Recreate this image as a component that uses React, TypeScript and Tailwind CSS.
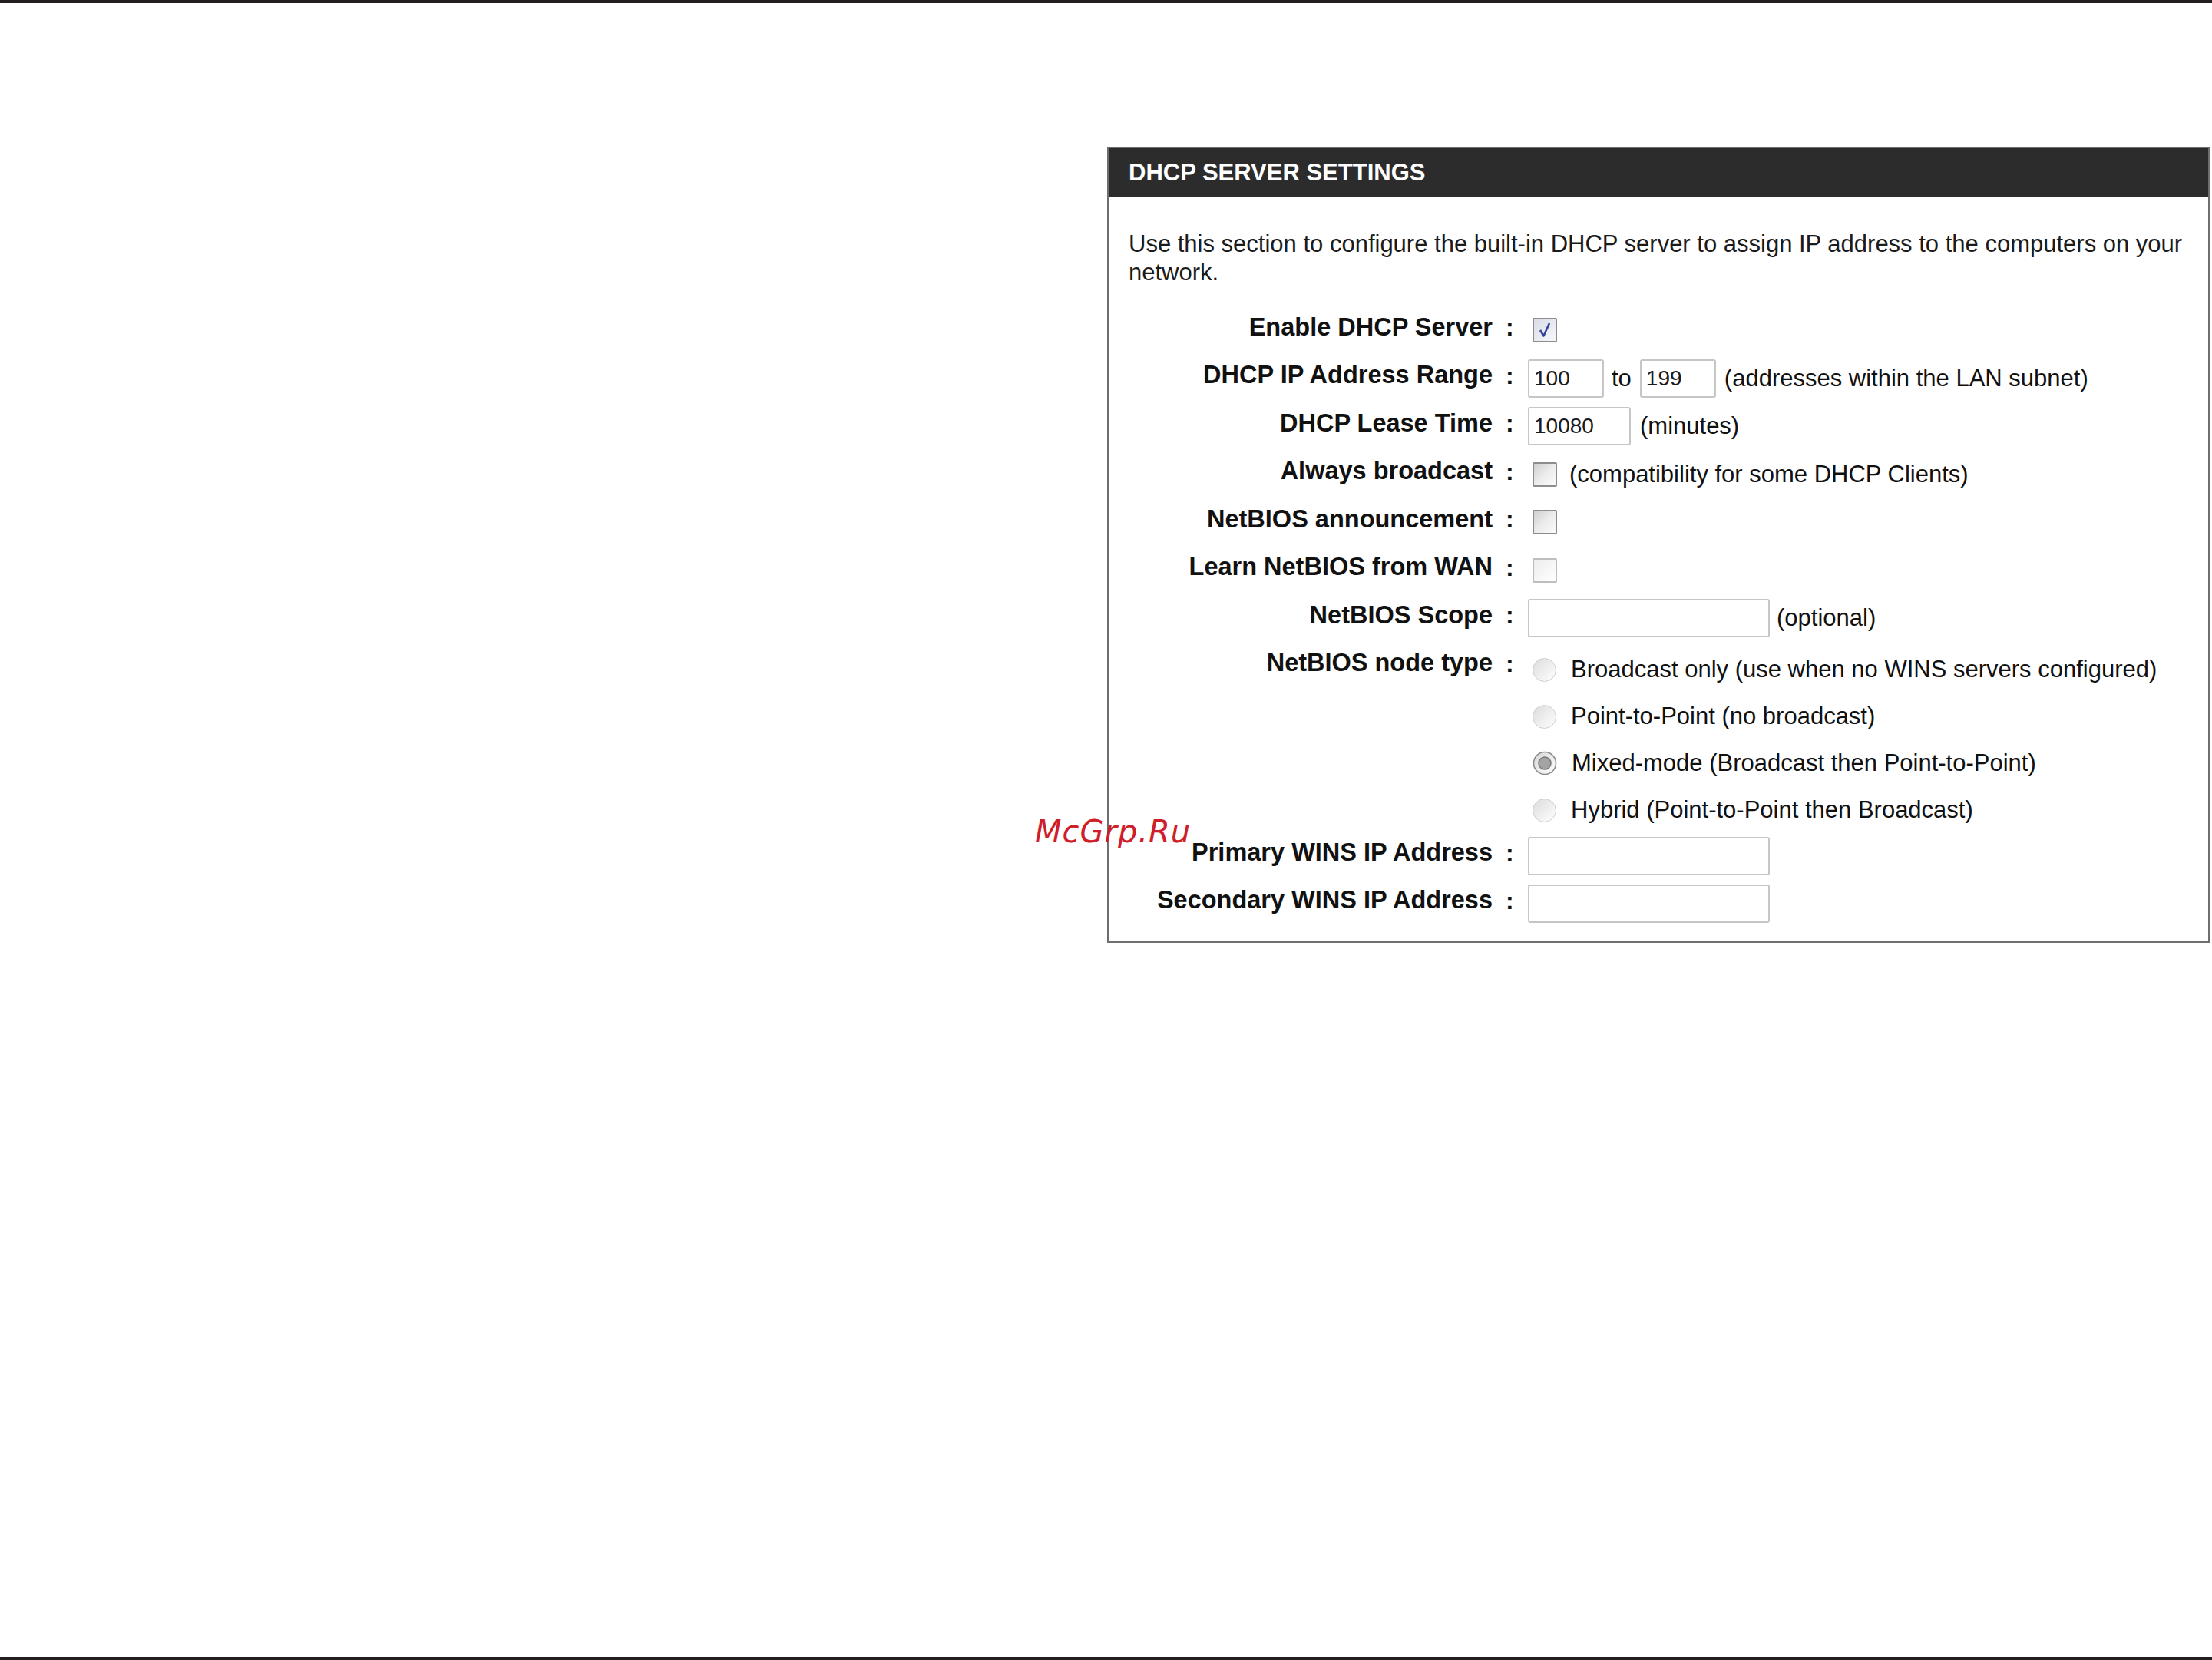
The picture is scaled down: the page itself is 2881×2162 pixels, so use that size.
import React from "react"

type BoxKind = "checked" | "dark" | "light"

function CheckBox({ kind }: { kind: BoxKind }) {
  if (kind === "checked") {
    return (
      <div className="w-[32px] h-[32px] rounded-[2px] border-2 border-[#8d8d8d] bg-linear-to-br from-[#d9dce6] to-[#f7f8fb] flex items-center justify-center">
        <svg width="24" height="24" viewBox="0 0 24 24">
          <path d="M6 12 L10.5 19.5 L18 3" fill="none" stroke="#34439a" strokeWidth="2.6" strokeLinejoin="round" />
        </svg>
      </div>
    )
  }
  if (kind === "dark") {
    return <div className="w-[32px] h-[32px] rounded-[2px] border-2 border-[#8d8d8d] bg-linear-to-br from-[#cfcfcf] via-[#ececec] to-[#fbfbfb]" />
  }
  return <div className="w-[32px] h-[32px] rounded-[2px] border-2 border-[#bdbdbd] bg-linear-to-br from-[#ececec] to-white" />
}

function Radio({ selected }: { selected?: boolean }) {
  if (selected) {
    return (
      <svg width="32" height="32" viewBox="0 0 32 32">
        <defs>
          <linearGradient id="rsel" x1="0" y1="0" x2="1" y2="1">
            <stop offset="0" stopColor="#d6d6d6" />
            <stop offset="1" stopColor="#ffffff" />
          </linearGradient>
        </defs>
        <circle cx="16" cy="16" r="14.5" fill="url(#rsel)" stroke="#8a8a8a" strokeWidth="1.6" />
        <circle cx="16" cy="16" r="8" fill="#a3a3a3" stroke="#767676" strokeWidth="1.4" />
      </svg>
    )
  }
  return <div className="w-[31px] h-[31px] rounded-full border border-[#cfcfcf] bg-linear-to-br from-[#dcdcdc] to-white" />
}

function TextBox({ width, value }: { width: string; value?: string }) {
  return (
    <div className={`${width} h-[50px] rounded-[3px] border-2 border-[#c6c6c6] bg-white flex items-center pl-[6px] text-[28px] text-[#1a1a1a]`}>
      {value}
    </div>
  )
}

function Row({ label, children }: { label: string; children?: React.ReactNode }) {
  return (
    <div className="flex h-[62.5px] items-center">
      <div className="w-[500px] shrink-0 text-right font-bold text-[32.5px] text-[#111]">{label}</div>
      <div className="ml-[17px] w-[11px] font-bold text-[32px] text-[#111]">:</div>
      <div className="ml-[18px] mt-[8px] flex items-center">{children}</div>
    </div>
  )
}

const nodeTypes = [
  { text: "Broadcast only (use when no WINS servers configured)" },
  { text: "Point-to-Point (no broadcast)" },
  { text: "Mixed-mode (Broadcast then Point-to-Point)", selected: true },
  { text: "Hybrid (Point-to-Point then Broadcast)" },
]

export default function App() {
  return (
    <div className="relative flex min-h-[2162px] w-full flex-col bg-white font-['Liberation_Sans',Arial,sans-serif] text-[#111]">
      <div className="h-[4px] bg-[#231f20]" />

      <div className="flex-1 pl-[1442px] pt-[187px]">
        {/* DHCP Server Settings panel */}
        <div className="w-[1436px] border-2 border-[#6e6e6e] pb-[22px]">
          <div className="flex h-[64px] items-center bg-[#2c2c2c] pl-[26px] text-[31px] font-bold text-white">
            DHCP SERVER SETTINGS
          </div>

          <p className="pl-[26px] pt-[42px] text-[31px] leading-[37px] text-[#1b1b1b]">
            Use this section to configure the built-in DHCP server to assign IP address to the computers on your network.
          </p>

          <div className="mt-[22px] text-[31px]">
            <Row label="Enable DHCP Server">
              <div className="ml-[6px]">
                <CheckBox kind="checked" />
              </div>
            </Row>
            <Row label="DHCP IP Address Range">
              <TextBox width="w-[99px]" value="100" />
              <span className="ml-[10px]">to</span>
              <div className="ml-[11px]">
                <TextBox width="w-[99px]" value="199" />
              </div>
              <span className="ml-[11px]">(addresses within the LAN subnet)</span>
            </Row>
            <Row label="DHCP Lease Time">
              <TextBox width="w-[134px]" value="10080" />
              <span className="ml-[12px]">(minutes)</span>
            </Row>
            <Row label="Always broadcast">
              <div className="ml-[6px]">
                <CheckBox kind="dark" />
              </div>
              <span className="ml-[16px]">(compatibility for some DHCP Clients)</span>
            </Row>
            <Row label="NetBIOS announcement">
              <div className="ml-[6px]">
                <CheckBox kind="dark" />
              </div>
            </Row>
            <Row label="Learn NetBIOS from WAN">
              <div className="ml-[6px]">
                <CheckBox kind="light" />
              </div>
            </Row>
            <Row label="NetBIOS Scope">
              <TextBox width="w-[315px]" />
              <span className="ml-[9px]">(optional)</span>
            </Row>

            <div className="flex items-start">
              <div className="flex h-[62.5px] w-[500px] shrink-0 items-center justify-end font-bold text-[32.5px]">NetBIOS node type</div>
              <div className="ml-[17px] flex h-[62.5px] w-[11px] items-center font-bold text-[32px]">:</div>
              <div className="ml-[18px] flex flex-col pt-[9px]">
                {nodeTypes.map((n) => (
                  <div key={n.text} className="flex h-[61px] items-center">
                    <div className="ml-[6px]">
                      <Radio selected={n.selected} />
                    </div>
                    <span className="ml-[19px]">{n.text}</span>
                  </div>
                ))}
              </div>
            </div>

            <div className="-mt-[6px] [&>div]:h-[62px]">
              <Row label="Primary WINS IP Address">
                <TextBox width="w-[315px]" />
              </Row>
              <Row label="Secondary WINS IP Address">
                <TextBox width="w-[315px]" />
              </Row>
            </div>
          </div>
        </div>
      </div>

      <div className="h-[4px] bg-[#231f20]" />

      {/* watermark */}
      <div className="absolute left-[1348px] top-[1063px] text-[40px] italic leading-none tracking-[1px] text-[#cf2029] font-['DejaVu_Sans','Liberation_Sans',sans-serif]">
        McGrp.Ru
      </div>
    </div>
  )
}
